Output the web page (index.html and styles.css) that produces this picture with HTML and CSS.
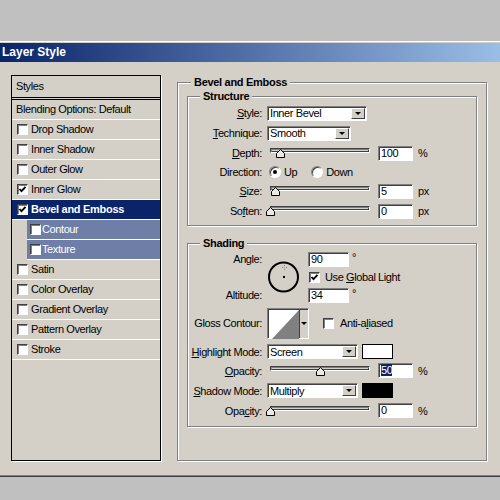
FILE: index.html
```html
<!DOCTYPE html>
<html lang="en">
<head>
    <meta charset="UTF-8">
    <title>Layer Style</title>
    <link rel="stylesheet" href="styles.css">
</head>
<body>
<div class="window">
    <div class="titlebar">Layer Style</div>
    <div class="dialog">

        <!-- Styles list -->
        <div class="styles-list">
            <div class="list-head">Styles</div>
            <div class="row plain">Blending Options: Default</div>
            <div class="row"><span class="check"></span>Drop Shadow</div>
            <div class="row"><span class="check"></span>Inner Shadow</div>
            <div class="row"><span class="check"></span>Outer Glow</div>
            <div class="row"><span class="check"><svg width="9" height="9"><path d="M1.5 4 L3.5 6.2 L7.5 1.8" fill="none" stroke="#000" stroke-width="1.8"/></svg></span>Inner Glow</div>
            <div class="row active"><span class="check"><svg width="9" height="9"><path d="M1.5 4 L3.5 6.2 L7.5 1.8" fill="none" stroke="#000" stroke-width="1.8"/></svg></span>Bevel and Emboss</div>
            <div class="row sub"><span class="check"></span>Contour</div>
            <div class="row sub"><span class="check"></span>Texture</div>
            <div class="row"><span class="check"></span>Satin</div>
            <div class="row"><span class="check"></span>Color Overlay</div>
            <div class="row"><span class="check"></span>Gradient Overlay</div>
            <div class="row"><span class="check"></span>Pattern Overlay</div>
            <div class="row"><span class="check"></span>Stroke</div>
        </div>

        <!-- Bevel and Emboss settings -->
        <div class="group outer">
            <span class="group-title outer-title">Bevel and Emboss</span>

            <div class="group structure">
                <span class="group-title">Structure</span>
                <div class="form">
                    <span class="label"><u>S</u>tyle:</span>
                    <div class="wide"><div class="select w100"><span>Inner Bevel</span><span class="drop"></span></div></div>

                    <span class="label"><u>T</u>echnique:</span>
                    <div class="wide"><div class="select w84"><span>Smooth</span><span class="drop"></span></div></div>

                    <span class="label"><u>D</u>epth:</span>
                    <div class="slider"><div class="track"></div><svg class="thumb" style="left: 6px" width="9" height="9"><polygon points="0.5,8.5 0.5,4.5 4.5,0.5 8.5,4.5 8.5,8.5" fill="#ece9e4" stroke="#000"/></svg></div>
                    <div class="field">100</div>
                    <span class="unit">%</span>

                    <span class="label">Direction:</span>
                    <div class="wide radios">
                        <span class="radio on"></span><span class="radio-text">Up</span>
                        <span class="radio second"></span><span class="radio-text">Down</span>
                    </div>

                    <span class="label"><u>S</u>ize:</span>
                    <div class="slider"><div class="track"></div><svg class="thumb" style="left: 1px" width="9" height="9"><polygon points="0.5,8.5 0.5,4.5 4.5,0.5 8.5,4.5 8.5,8.5" fill="#ece9e4" stroke="#000"/></svg></div>
                    <div class="field">5</div>
                    <span class="unit">px</span>

                    <span class="label">So<u>f</u>ten:</span>
                    <div class="slider"><div class="track"></div><svg class="thumb" style="left: -4px" width="9" height="9"><polygon points="0.5,8.5 0.5,4.5 4.5,0.5 8.5,4.5 8.5,8.5" fill="#ece9e4" stroke="#000"/></svg></div>
                    <div class="field">0</div>
                    <span class="unit">px</span>
                </div>
            </div>

            <div class="group shading">
                <span class="group-title">Shading</span>
                <div class="angle">
                    <span class="label angle-label">Angle:</span>
                    <svg class="dial" width="33" height="32">
                        <circle cx="16.5" cy="16" r="14.5" fill="none" stroke="#000" stroke-width="2"/>
                        <rect x="16" y="15" width="2" height="2" fill="#000"/>
                        <path d="M15 6.5 H20 M17.5 4 V9" stroke="#8a8a8a" stroke-width="1" stroke-dasharray="1 1"/>
                    </svg>
                    <div class="with-unit angle-field"><div class="field w41">90</div><span class="deg">°</span></div>
                    <div class="checkline global"><span class="check"><svg width="9" height="9"><path d="M1.5 4 L3.5 6.2 L7.5 1.8" fill="none" stroke="#000" stroke-width="1.8"/></svg></span><span>Use <u>G</u>lobal Light</span></div>
                    <span class="label altitude-label">Altitude:</span>
                    <div class="with-unit altitude-field"><div class="field w41">34</div><span class="deg">°</span></div>
                </div>

                <div class="form lower">
                    <span class="label">Gloss Contour:</span>
                    <div class="wide checkline">
                        <div class="contour">
                            <svg width="30" height="29"><rect width="30" height="29" fill="#fff"/><polygon points="3,29 30,0 30,29" fill="#808080"/></svg>
                            <span class="contour-btn"><span class="arrow"></span></span>
                        </div>
                        <span class="check anti"></span><span>Anti-a<u>l</u>iased</span>
                    </div>

                    <span class="label"><u>H</u>ighlight Mode:</span>
                    <div class="wide mode"><div class="select w91"><span>Screen</span><span class="drop"></span></div><span class="swatch"></span></div>

                    <span class="label"><u>O</u>pacity:</span>
                    <div class="slider"><div class="track"></div><svg class="thumb" style="left: 46px" width="9" height="9"><polygon points="0.5,8.5 0.5,4.5 4.5,0.5 8.5,4.5 8.5,8.5" fill="#ece9e4" stroke="#000"/></svg></div>
                    <div class="field"><span class="sel">50</span></div>
                    <span class="unit">%</span>

                    <span class="label"><u>S</u>hadow Mode:</span>
                    <div class="wide mode"><div class="select w91"><span>Multiply</span><span class="drop"></span></div><span class="swatch black"></span></div>

                    <span class="label">Opa<u>c</u>ity:</span>
                    <div class="slider"><div class="track"></div><svg class="thumb" style="left: -4px" width="9" height="9"><polygon points="0.5,8.5 0.5,4.5 4.5,0.5 8.5,4.5 8.5,8.5" fill="#ece9e4" stroke="#000"/></svg></div>
                    <div class="field">0</div>
                    <span class="unit">%</span>
                </div>
            </div>
        </div>
    </div>
</div>
</body>
</html>
```

FILE: styles.css
```css
body {
    margin: 0;
    background: #c0c0c0;
    font-family: "Liberation Sans", Arial, sans-serif;
    font-size: 11px;
    letter-spacing: -0.4px;
    color: #000;
}
.window {
    margin-top: 41px;
    border-top: 1px solid #fff;
    border-bottom: 1px solid #404040;
    padding-top: 1px;
    background: #d4d0c8;
}
.titlebar {
    height: 19px;
    line-height: 19px;
    padding-left: 2px;
    color: #fff;
    font-size: 12px;
    font-weight: bold;
    letter-spacing: 0;
    background: linear-gradient(to right, #0a246a 0, #a6caf0 540px);
}
.dialog {
    display: flex;
    align-items: flex-start;
    height: 414px;
    box-sizing: border-box;
    padding: 13px 0 0 11px;
    border-bottom: 1px solid #808080;
}

/* styles list */
.styles-list {
    flex-shrink: 0;
    width: 150px;
    height: 386px;
    box-sizing: border-box;
    border: 1px solid #000;
    box-shadow: 1px 1px 0 #fff;
}
.list-head {
    height: 20px;
    line-height: 20px;
    padding: 0 0 1px 4px;
    border-bottom: 3px double #000;
}
.row {
    display: flex;
    align-items: center;
    height: 18px;
    padding: 0 0 1px 5px;
    border-bottom: 1px solid #fff;
    white-space: nowrap;
}
.row.plain {
    padding-left: 4px;
}
.row .check {
    margin-right: 3px;
}
.row.active {
    background: #0a246a;
    color: #fff;
    font-weight: bold;
    letter-spacing: -0.3px;
}
.row.sub {
    margin-left: 15px;
    padding-left: 3px;
    background: #6e7ea6;
    color: #fff;
}
.row.sub .check {
    margin-right: 1px;
}
.check {
    display: inline-flex;
    align-items: center;
    justify-content: center;
    flex-shrink: 0;
    width: 11px;
    height: 11px;
    box-sizing: border-box;
    background: #fff;
    border: 1px solid;
    border-color: #404040 #fff #fff #404040;
    box-shadow: inset 1px 1px 0 #808080;
}
.check svg {
    display: block;
}

/* group boxes */
.group {
    position: relative;
    box-sizing: border-box;
    border: 1px solid #808080;
    box-shadow: 1px 1px 0 #fff, inset 1px 1px 0 #fff;
}
.group-title {
    position: absolute;
    top: -7px;
    left: 12px;
    padding: 0 3px;
    line-height: 13px;
    background: #d4d0c8;
    font-weight: bold;
    letter-spacing: -0.3px;
}
.outer {
    width: 310px;
    margin: 7px 0 0 16px;
    padding: 13px 0 33px 9px;
}
.outer-title {
    left: 13px;
}
.structure {
    width: 290px;
    margin-bottom: 17px;
    padding: 6px 0 4px;
}
.shading {
    width: 290px;
    padding: 6px 0 6px;
}

/* form grids */
.form {
    display: grid;
    grid-template-columns: 74px 106px 35px auto;
    column-gap: 5px;
    align-items: center;
}
.structure .form {
    grid-template-rows: 20px 20px 20px 18px 20px 20px;
}
.form.lower {
    grid-template-rows: 38px 19px 19px 21px 19px;
}
.label {
    text-align: right;
    white-space: nowrap;
}
.wide {
    grid-column: 2 / -1;
    display: flex;
    align-items: center;
}
.unit {
    white-space: nowrap;
}

.select {
    display: flex;
    align-items: center;
    height: 15px;
    box-sizing: border-box;
    padding-left: 2px;
    background: #fff;
    border: 1px solid;
    border-color: #808080 #fff #fff #808080;
    box-shadow: inset 1px 1px 0 #404040;
    white-space: nowrap;
}
.w100 { width: 100px; }
.w84 { width: 84px; }
.w91 { width: 91px; }
.drop {
    display: flex;
    align-items: center;
    justify-content: center;
    width: 14px;
    height: 11px;
    box-sizing: border-box;
    margin: 0 1px 0 auto;
    background: #d4d0c8;
    border: 1px solid;
    border-color: #fff #404040 #404040 #fff;
}
.drop::after,
.arrow {
    content: "";
    width: 0;
    height: 0;
    border-left: 3px solid transparent;
    border-right: 3px solid transparent;
    border-top: 3px solid #000;
}

.field {
    width: 35px;
    height: 15px;
    box-sizing: border-box;
    padding-left: 2px;
    line-height: 13px;
    background: #fff;
    border: 1px solid;
    border-color: #808080 #fff #fff #808080;
    box-shadow: inset 1px 1px 0 #404040;
}
.field.w41 {
    width: 41px;
}
.sel {
    background: #0a246a;
    color: #fff;
}

.slider {
    position: relative;
    width: 100px;
    height: 10px;
    margin-left: 3px;
}
.track {
    height: 5px;
    box-sizing: border-box;
    background: #d4d0c8;
    border: 1px solid;
    border-color: #404040 #fff #fff #404040;
    box-shadow: inset 1px 1px 0 #808080, inset -1px -1px 0 #404040;
}
.thumb {
    position: absolute;
    top: 1px;
    display: block;
}

.radios .radio {
    margin-left: 2px;
}
.radio {
    position: relative;
    width: 12px;
    height: 12px;
    box-sizing: border-box;
    border-radius: 50%;
    background: #fff;
    border: 1px solid;
    border-color: #808080 #fff #fff #808080;
    box-shadow: inset 1px 1px 0 #404040;
}
.radio.on::after {
    content: "";
    position: absolute;
    top: 3px;
    left: 3px;
    width: 4px;
    height: 4px;
    border-radius: 50%;
    background: #000;
}
.radios .radio.second {
    margin-left: 14px;
}
.radio-text {
    margin-left: 3px;
}

/* angle block */
.angle {
    display: grid;
    grid-template-columns: 74px 36px auto;
    grid-template-rows: 18px 18px 18px;
    column-gap: 5px;
    align-items: center;
}
.angle-label { grid-column: 1; grid-row: 1; }
.altitude-label { grid-column: 1; grid-row: 3; }
.dial {
    grid-column: 2;
    grid-row: 1 / 4;
    display: block;
}
.angle-field { grid-column: 3; grid-row: 1; }
.global { grid-column: 3; grid-row: 2; margin-left: 1px; }
.altitude-field { grid-column: 3; grid-row: 3; }
.with-unit {
    display: flex;
    align-items: flex-start;
}
.deg {
    margin-left: 3px;
    line-height: 10px;
}
.checkline {
    display: flex;
    align-items: center;
    white-space: nowrap;
}
.global .check {
    margin-right: 5px;
}

.contour {
    display: flex;
    width: 42px;
    height: 31px;
    box-sizing: border-box;
    border: 1px solid;
    border-color: #808080 #fff #fff #808080;
    box-shadow: inset 1px 1px 0 #404040;
}
.contour svg {
    display: block;
    margin: 1px 0 0 1px;
}
.contour-btn {
    display: flex;
    align-items: center;
    justify-content: center;
    flex: 1;
    margin-top: 1px;
    border-left: 1px solid #404040;
    background: #d4d0c8;
}
.check.anti {
    margin: 0 6px 0 14px;
}

.mode .swatch {
    margin-left: 4px;
}
.swatch {
    width: 31px;
    height: 15px;
    box-sizing: border-box;
    background: #fff;
    border: 1px solid #000;
}
.swatch.black {
    background: #000;
}
```
